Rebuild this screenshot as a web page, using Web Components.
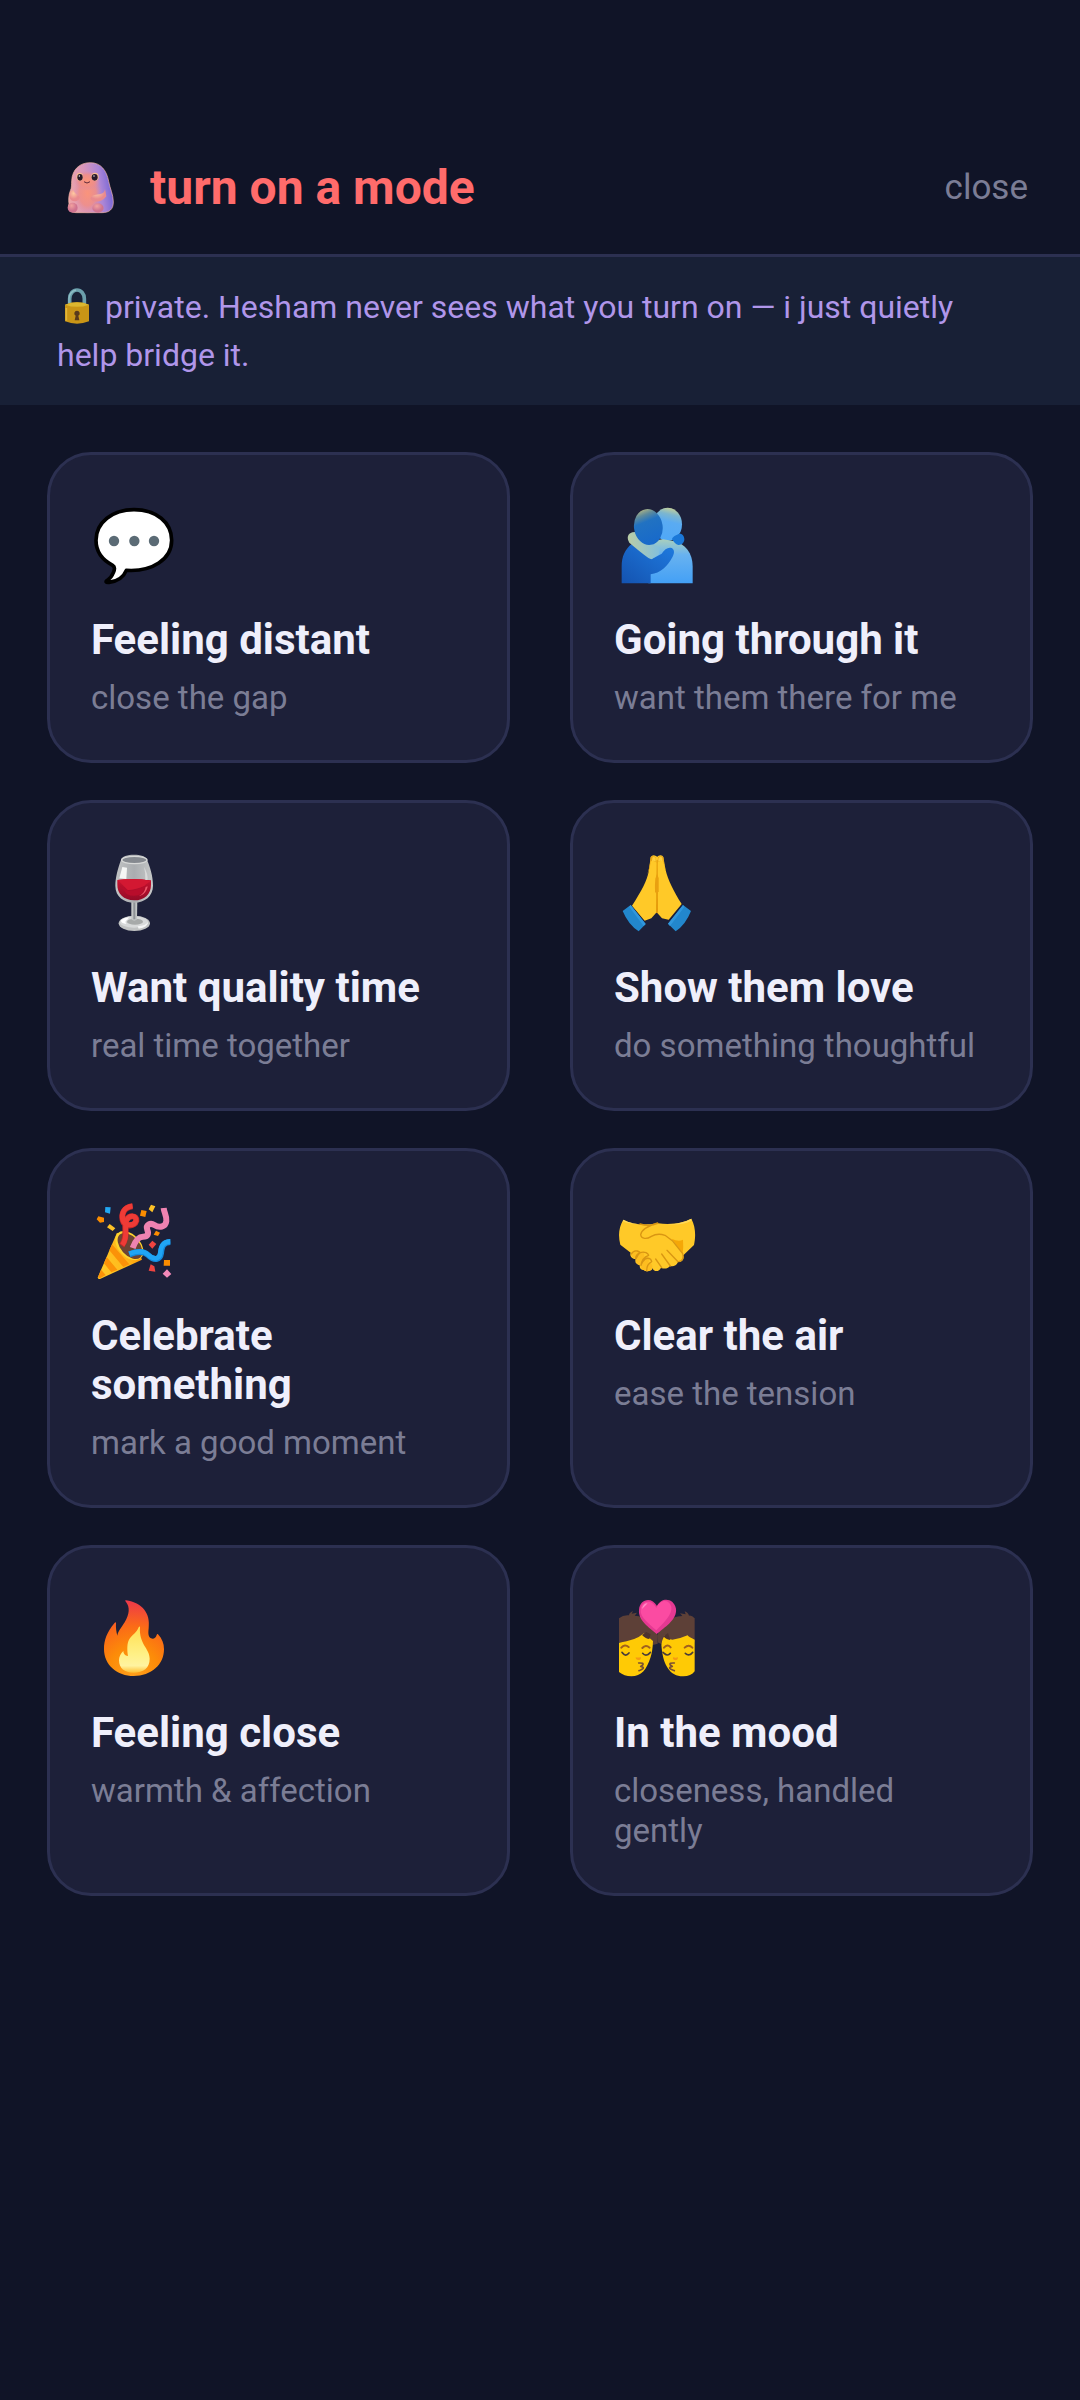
<!DOCTYPE html>
<html lang="en">
<head>
<meta charset="utf-8">
<meta name="viewport" content="width=device-width, initial-scale=1">
<title>turn on a mode</title>
<style>
  :root {
    --bg: #101427;
    --note: #182036;
    --card: #1d2039;
    --line: #2c3051;
    --text: #efeffb;
    --muted: #7b7d95;
    --coral: #ff6b6b;
    --lilac: #b096ea;
  }
  body {
    margin: 0;
    min-height: 100vh;
    background: var(--bg);
    color: var(--text);
    font-family: Roboto, "Liberation Sans", sans-serif;
  }
</style>
</head>
<body>
<mode-screen>
  <mode-header slot="header">turn on a mode</mode-header>
  <private-note slot="note">private. Hesham never sees what you turn on — i just quietly help bridge it.</private-note>
  <mode-card icon="speech" label="Feeling distant">close the gap</mode-card>
  <mode-card icon="hug" label="Going through it">want them there for me</mode-card>
  <mode-card icon="wine" label="Want quality time">real time together</mode-card>
  <mode-card icon="pray" label="Show them love">do something thoughtful</mode-card>
  <mode-card icon="party" label="Celebrate something">mark a good moment</mode-card>
  <mode-card icon="shake" label="Clear the air">ease the tension</mode-card>
  <mode-card icon="fire" label="Feeling close">warmth &amp; affection</mode-card>
  <mode-card icon="kiss" label="In the mood">closeness, handled gently</mode-card>
</mode-screen>

<script>
(function () {
  // box = viewBox, 3 units per css pixel
  const ICONS = {
    speech: {
      box: '18 0 270 300',
      art: `
        <path d="M147 44C82 44 33 82 33 136c0 32 17 58 50 75 7 4 6 13 2 22-4 10-10 18-17 22-8 5-5 8 4 7 25-3 43-14 52-36 78 5 136-33 136-90 0-54-46-92-113-92z" fill="#fff" stroke="#000" stroke-width="11" stroke-linejoin="round"/>
        <g fill="#5b6b75"><circle cx="87" cy="138" r="15.500"/><circle cx="148" cy="138" r="15.500"/><circle cx="207" cy="138" r="15.500"/></g>`
    },
    hug: {
      box: '27 0 270 300',
      art: `
        <defs>
          <linearGradient id="h1" x1=".6" y1="0" x2=".4" y2="1"><stop offset="0" stop-color="#c5cf98"/><stop offset=".2" stop-color="#7cb6cf"/><stop offset=".42" stop-color="#5aabf2"/><stop offset="1" stop-color="#4fa8f8"/></linearGradient>
          <linearGradient id="h2" x1=".4" y1="0" x2=".6" y2="1"><stop offset="0" stop-color="#a8b086"/><stop offset=".15" stop-color="#5e8b9c"/><stop offset=".34" stop-color="#2172c2"/><stop offset="1" stop-color="#1769cb"/></linearGradient>
          <linearGradient id="h3" x1="0" y1="0" x2="0" y2="1"><stop offset="0" stop-color="#a9cfbd"/><stop offset=".35" stop-color="#68b2f0"/><stop offset="1" stop-color="#43a0f6"/></linearGradient>
          <linearGradient id="h4" x1="0" y1="1" x2="1" y2="0"><stop offset="0" stop-color="#1453b0"/><stop offset="1" stop-color="#1f7be0"/></linearGradient>
          <linearGradient id="h5"><stop offset="0" stop-color="#b9cda6"/><stop offset="1" stop-color="#83bfdc"/></linearGradient>
        </defs>
        <ellipse cx="188" cy="88" rx="43" ry="50" fill="url(#h1)"/>
        <path d="M130 265V150q20-15 44-17l32 5c35 9 57 36 57 77v50z" fill="url(#h3)"/>
        <path d="M50 265v-50c0-31 10-53 31-69l60 46 29-16c9-14 20-21 30-17 10 5 8 17 2 28-14 27-36 48-65 51v27z" fill="url(#h4)"/>
        <path d="M73 143c-9-14-5-27 9-31l17-2 65 50-1 18-24 15q-12-4-66-50z" fill="url(#h5)"/>
        <ellipse cx="130" cy="96" rx="43" ry="54" fill="url(#h2)" transform="rotate(-8 130 96)"/>
        <path d="M201 133c2-9 12-12 20-16 10-3 17 6 17 16 0 11-9 18-18 17-8-1-13-9-19-17z" fill="#1b78d8"/>`
    },
    wine: {
      box: '18 -6 270 300',
      art: `
        <defs>
          <linearGradient id="w1"><stop offset="0" stop-color="#c2c4c5"/><stop offset=".5" stop-color="#aaadb0"/><stop offset="1" stop-color="#c6c8c8"/></linearGradient>
          <linearGradient id="w2" x1="0" y1="0" x2="0" y2="1"><stop offset="0" stop-color="#c81430"/><stop offset="1" stop-color="#940b27"/></linearGradient>
        </defs>
        <ellipse cx="148" cy="235" rx="47" ry="23" fill="#c1c3c3"/>
        <ellipse cx="147" cy="231" rx="42" ry="17" fill="#d8dada"/>
        <ellipse cx="150" cy="230" rx="24" ry="9" fill="#a7aaa9"/>
        <path d="M139 165h18l-1 58q-8 8-17 0z" fill="#c2c5c5"/>
        <path d="M145 170h6v53h-6z" fill="#8e9296"/>
        <path d="M108 45C99 68 91 99 91 122c0 34 26 51 57 51s56-20 56-51c0-29-9-57-18-77-3-21-75-21-78 0z" fill="url(#w1)"/>
        <path d="M97 105q51-7 101 1v13c0 29-20 47-50 47-32 0-52-20-51-48z" fill="url(#w2)"/>
        <path d="M98 105q49-7 99 3-14 10-18 14-33 14-51 13z" fill="#d31832"/>
        <path d="M103 119l27 18q30-1 49-14l-7 22q-23 14-47 2z" fill="#b80d2b"/>
        <ellipse cx="148" cy="45" rx="38" ry="11" fill="#85898f" stroke="#d8d9d8" stroke-width="4"/>
        <path d="M112 66l14 2-2 34-21-2z" fill="#f5f6f5"/>
        <path d="M177 65q12 21 11 40h-7q1-21-4-40z" fill="#d9dada"/>
        <path d="M182 126c-2 13-9 22-20 27 15-3 24-15 26-29z" fill="#ef5367"/>
        <path d="M108 226q10-9 24-9l-5 7q-10 6-2 13-18-1-17-11z" fill="#fff"/>
        <path d="M158 244q24-2 31-13 1 16-28 20z" fill="#f4f5f5"/>`
    },
    pray: {
      box: '27 -6 270 300',
      art: `
        <path d="M137 36q6-9 16-3 5 4 6 0 12-5 16 3l7 40c7 29 23 62 48 101l-39 47-20-4-16-18-16 18-20 7-38-45c30-47 45-76 50-102z" fill="#ffc928"/>
        <path d="M155 45l-2 157 3 3 3-3-1-157z" fill="#e59b0b"/>
        <path d="M151 101q-2 20-1 39l5 8 6-9V99l-5-13z" fill="#e9a010"/>
        <path d="M137 37q5-6 14-1l4 17q-11-10-18-3l-3 20-13 34q14-33 16-67zM175 37q-6-6-15-1l-4 17q12-10 19-3l5 22 11 29q-14-31-16-64z" fill="#e9a414"/>
        <path d="M142 38q5-6 10 2v10q-6-5-11 0zM160 41q5-10 12-2l1 11q-6-5-13 0z" fill="#ffd03e"/>
        <path d="M77 180l45 57-21 22q-31-20-48-61zM234 180l-45 56 23 23q30-20 46-61z" fill="#2287cd"/>
        <path d="M77 180l45 57-6 6-43-57zM234 180l-45 56 6 7 43-57z" fill="#3097dd"/>`
    },
    party: {
      box: '18 3 270 300',
      art: `
        <defs><linearGradient id="p1" x1="0" y1=".7" x2="1" y2=".3"><stop offset="0" stop-color="#ffc928"/><stop offset=".6" stop-color="#ffb719"/><stop offset="1" stop-color="#fb8c00"/></linearGradient></defs>
        <path d="M96 128L38 263q1 5 7 4l126-58-20-50z" fill="url(#p1)"/>
        <path d="M81 163l52 60-18 8-42-50zM65 201l32 38-18 8-22-27zM48 239l14 16-17 10-6-3z" fill="#fb9208"/>
        <ellipse cx="133" cy="167" rx="33" ry="51" transform="rotate(-43 133 167)" fill="#ffd42d"/>
        <ellipse cx="135" cy="168" rx="28" ry="46" transform="rotate(-42 135 168)" fill="#6d4434"/>
        <path d="M142 49c-27 4-33 24-29 41 5 22 36 21 41 2 2-17-21-17-30-1-10 20 8 47-14 76" fill="none" stroke="#c62828" stroke-width="18"/>
        <path d="M143 48c-28 3-34 24-30 41 6 21 35 19 40 3 1-17-19-17-28-2-10 21 8 46-13 75" fill="none" stroke="#ef3b36" stroke-width="15"/>
        <path d="M143 174q12-34 31-34c14 0 18-8 13-20-6-15 9-23 21-15 14 9 34 7 36-12 2-15-7-25-8-39" fill="none" stroke="#ef83b1" stroke-width="18"/>
        <path d="M133 193c27-10 44-10 56 2 19 19 36 15 39-5 2-20 5-33 28-34" fill="none" stroke="#1389dc" stroke-width="18"/>
        <path d="M133 191c27-10 44-9 56 3 19 18 35 13 37-7 2-20 8-32 30-33" fill="none" stroke="#20a5f5" stroke-width="14"/>
        <g fill="#fb8c00"><path d="M40 79l17 4v13l-12 2-10-10zM169 60l16 3-4 18-16-4zM213 122l12 6-6 10-13-4zM237 210h18v17h-19z"/></g>
        <g fill="#fcc127"><path d="M74 102l17 13-8 8-17-11zM198 44l13 5-9 18-11-9z"/></g>
        <g fill="#ef4440"><path d="M202 152l12 10-12 14-11-12zM197 223l11 6 3 16-20-3z"/></g>
        <path d="M61 51l16 1-2 19-15-4z" fill="#22a7f2"/>
        <path d="M246 238l13 14-13 11-13-12z" fill="#f389b9"/>`
    },
    shake: {
      box: '27 3 270 300',
      art: `
        <path d="M55 89c29 15 61 18 104 11 46 5 76-2 100-14 14 26 13 56 8 79l-32 31c2 13-2 20-16 20-5 12-15 15-24 12-8 10-19 9-27 5-6 14-21 13-27 1-6 10-15 14-25 6-9 0-14-7-11-16-13 0-16-8-13-17-11-1-19-9-15-19l-31-24c-7-27-5-52 9-75z" fill="#ffc928"/>
        <path d="M55 89q25 13 58 14-42 0-60-9zM259 86q-30 16-72 17 44 3 72-11z" fill="#ffd95b"/>
        <path d="M200 146q20 10 34 3 2 22-1 43z" fill="#f5a707"/>
        <path d="M77 188q0 14 15 19 1 18 15 20 2 14 17 15 9 3 17-3 4-17-6-21l-5 2q5-15-5-21l-8 1q3-13-8-17l-8 2q-9-11-24 3z" fill="#fdbd20"/>
        <path d="M158 99c-27 8-48 17-51 35 2 14 19 14 32 5 14-8 27-8 41-3l22 16 31 39q6 19-11 24M186 181l33 34M170 192l26 36M152 207l18 26M79 192q7-12 18-9 6 2 8 5-13 6-13 18M93 206c8-18 16-23 30-18q6 3 8 8-20 7-23 30M108 225c8-16 17-26 29-17q3 5 3 7-15 8-15 27M105 102q30 9 53-2" fill="none" stroke="#d99613" stroke-width="4" stroke-linecap="round" stroke-linejoin="round"/>`
    },
    fire: {
      box: '18 -6 270 300',
      art: `
        <defs>
          <radialGradient id="f1" gradientUnits="userSpaceOnUse" cx="145" cy="245" r="210"><stop offset="0" stop-color="#ff9f1c"/><stop offset=".35" stop-color="#fc8c08"/><stop offset=".65" stop-color="#fb6b17"/><stop offset="1" stop-color="#ee3a48"/></radialGradient>
          <linearGradient id="f2" x1="0" y1="0" x2="0" y2="1"><stop offset="0" stop-color="#ffdf51"/><stop offset=".6" stop-color="#fff086"/><stop offset=".85" stop-color="#fff3a0"/><stop offset="1" stop-color="#ffbf32"/></linearGradient>
        </defs>
        <path d="M123 31c-3-1-3 2 0 5 12 15 11 36-4 61-11 18-20 27-22 40-3-11-5-24-4-37 0-4-2-4-5 0-22 26-31 51-31 77 0 49 40 81 89 81 53 0 91-34 91-80 0-17-6-32-18-45-1-2-3-1-4 2-3 10-10 13-17 10-8-3-9-14-7-30 6-45-19-77-68-84z" fill="url(#f1)"/>
        <path d="M165 110c0-1-3 0-4 2-5 16-21 23-29 37-6 11-6 30-3 49-10-1-14-7-14-15-8 8-13 17-13 28 0 24 17 37 43 37 31 0 49-15 49-42 0-32-33-43-29-96z" fill="url(#f2)"/>`
    },
    kiss: {
      box: '27 -6 270 300',
      art: `
        <path d="M42 85q13-11 30-9 0-8 12-13l-4 8 16-3-7 9q53 4 69 60v24l-26 7-90-12zM269 85q-9-10-17-8-2-9-13-13l3 9-17-3 7 8q-56 3-74 55l-1 24 26 11 86-11z" fill="#5d4037"/>
        <path d="M42 158q48-5 75-28l27 23q-1 29-7 48c-12 38-28 58-58 58-14 0-27-5-37-13zM269 149q-18-8-21-13-19 9-46 13-17-3-22-13-13 17-10 38c5 52 26 86 65 85 15 0 27-5 34-15z" fill="#ffca05"/>
        <path d="M111 135q12 12 22 12l4-14-13-7zM176 139q6 10 20 11l-7-21z" fill="#4d332e"/>
        <path d="M49 173q10-12 22-2M112 174q10-12 22-1M177 173q10-12 20-1M239 173q12-12 23 0" fill="none" stroke="#a1611e" stroke-width="6" stroke-linecap="round"/>
        <path d="M53 190q9 11 19-1M113 190q9 11 20 0M178 190q10 10 18 0M241 190q10 9 19 0M51 187l5 5M136 187l-6 6M174 187l7 6M263 187l-6 6" fill="none" stroke="#493c3a" stroke-width="5" stroke-linecap="round"/>
        <path d="M92 202q9 2 15-1 3 8-6 9-9 0-9-8zM204 202q8 2 15 0 0 9-8 9-9-2-7-9z" fill="#f69a13"/>
        <path d="M101 219q17-1 12 6l-6 4q14 3 4 9-8 5-9 4M208 219q-17-1-12 6l6 4q-14 3-4 9 8 4 10 4" fill="none" stroke="#795034" stroke-width="5" stroke-linecap="round" stroke-linejoin="round"/>
        <path d="M155 132c-22-20-56-40-53-73 2-32 38-41 54-11 15-30 52-22 57 8 4 33-36 57-58 76z" fill="#e53992"/>
        <path d="M154 121c-21-20-49-38-47-62 1-26 32-35 47-5 12-27 38-27 45-4 4 24-24 49-45 71z" fill="#fb4ba2"/>
        <path d="M111 57q3-17 17-17-8 8-17 17z" fill="#ff91c9"/>`
    },
    lock: {
      box: '0 0 120 120',
      art: `
        <path d="M38 62V38a22 26 0 0 1 44 0v24" fill="none" stroke="#6b9fac" stroke-width="11"/>
        <path d="M36 52V38c1-15 9-23 21-26" fill="none" stroke="#8dbdc5" stroke-width="4"/>
        <path d="M24 56q36-14 72 0v50q-36 14-72 0z" fill="#c99516"/>
        <path d="M24 56q36-14 72 0-36 13-72 0z" fill="#dcb72f"/>
        <path d="M28 66v38" stroke="#e2b638" stroke-width="5"/>
        <path d="M60 74a8 8 0 0 1 4 15l3 14H53l3-14a8 8 0 0 1 4-15z" fill="#593a1c"/>`
    },
    buddy: {
      box: '6 18 192 192',
      art: `
        <defs>
          <linearGradient id="b1" x1="0" y1=".6" x2="1" y2=".45"><stop offset="0" stop-color="#eea5a8"/><stop offset=".4" stop-color="#d996bb"/><stop offset=".72" stop-color="#ac86d6"/><stop offset="1" stop-color="#6f62d6"/></linearGradient>
          <radialGradient id="b2"><stop offset="0" stop-color="#fa947b"/><stop offset=".6" stop-color="#f08e86" stop-opacity=".85"/><stop offset="1" stop-color="#dd8ba6" stop-opacity="0"/></radialGradient>
          <radialGradient id="b3" cx=".4" cy=".3"><stop offset="0" stop-color="#ffc9a2"/><stop offset="1" stop-color="#e98a8e"/></radialGradient>
          <radialGradient id="b4" cx=".4" cy=".3"><stop offset="0" stop-color="#f2a19e"/><stop offset="1" stop-color="#cf7390"/></radialGradient>
        </defs>
        <path d="M106 38c32 0 49 24 55 56 4 22 14 40 14 62 0 22-12 32-34 32H64c-19 0-28-11-22-26-2-12-1-28 4-40 5-10 3-18 4-30 2-34 24-54 56-54z" fill="url(#b1)" stroke="#f6b8a8" stroke-width="2"/>
        <ellipse cx="98" cy="130" rx="42" ry="62" fill="url(#b2)"/>
        <ellipse cx="96" cy="92" rx="40" ry="30" fill="url(#b2)"/>
        <path d="M46 124c-6 17-1 30 13 30 11 0 18-8 14-15-6-5-14-8-18-19z" fill="url(#b3)"/>
        <path d="M150 117c-2 16-14 15-27 17-13 2-21 10-14 16 13 9 34 5 45-11z" fill="url(#b3)"/>
        <circle cx="53" cy="173" r="15" fill="url(#b4)"/>
        <ellipse cx="129" cy="174" rx="17" ry="14" fill="url(#b4)"/>
        <ellipse cx="74" cy="80" rx="10" ry="12" fill="#f7bd91"/><ellipse cx="120" cy="80" rx="11" ry="12" fill="#f7bd91"/>
        <ellipse cx="75" cy="82" rx="8" ry="10" fill="#271929"/><ellipse cx="119" cy="82" rx="9" ry="10" fill="#271929"/>
        <circle cx="73" cy="78" r="2" fill="#fff"/><circle cx="117" cy="78" r="2" fill="#fff"/>
        <path d="M88 96q8 7 16 0" fill="none" stroke="#5d2738" stroke-width="3" stroke-linecap="round"/>`
    }
  };

  class ModeIcon extends HTMLElement {
    connectedCallback() {
      const icon = ICONS[this.getAttribute('name')];
      this.attachShadow({ mode: 'open' }).innerHTML = `
        <style>
          :host { display: block; flex: none; }
          svg { display: block; width: 100%; height: 100%; }
        </style>
        <svg viewBox="${icon.box}" aria-hidden="true">${icon.art}</svg>`;
    }
  }

  class ModeHeader extends HTMLElement {
    connectedCallback() {
      this.attachShadow({ mode: 'open' }).innerHTML = `
        <style>
          :host { display: block; }
          header {
            display: flex; align-items: center; gap: 29px;
            padding: 156px 52px 34px 57px;
            border-bottom: 3px solid var(--line);
          }
          mode-icon { width: 64px; height: 64px; }
          h1 { flex: 1; margin: 0; font-size: 48px; line-height: 56px; font-weight: 700; color: var(--coral); }
          button {
            padding: 0; border: 0; background: none; cursor: pointer;
            font: 400 35px/42px Roboto, sans-serif; color: var(--muted);
          }
        </style>
        <header>
          <mode-icon name="buddy"></mode-icon>
          <h1><slot></slot></h1>
          <button type="button">close</button>
        </header>`;
    }
  }

  class PrivateNote extends HTMLElement {
    connectedCallback() {
      this.attachShadow({ mode: 'open' }).innerHTML = `
        <style>
          :host { display: block; background: var(--note); }
          p { margin: 0; padding: 26px 66px 26px 57px; font-size: 32px; line-height: 48px; color: var(--lilac); }
          mode-icon { display: inline-block; width: 40px; height: 40px; vertical-align: -8px; }
        </style>
        <p><mode-icon name="lock"></mode-icon> <slot></slot></p>`;
    }
  }

  class ModeCard extends HTMLElement {
    connectedCallback() {
      this.attachShadow({ mode: 'open' }).innerHTML = `
        <style>
          :host { display: grid; }
          button {
            display: flex; flex-direction: column; align-items: flex-start; justify-content: flex-start;
            padding: 40px 41px 42px;
            border: 3px solid var(--line); border-radius: 44px;
            background: var(--card); color: inherit;
            font-family: inherit; text-align: left; cursor: pointer;
          }
          mode-icon { width: 90px; height: 100px; margin-bottom: 20px; }
          .label { font-size: 42px; line-height: 49px; font-weight: 700; }
          .hint { margin-top: 14px; font-size: 33px; line-height: 40px; color: var(--muted); }
        </style>
        <button type="button">
          <mode-icon name="${this.getAttribute('icon')}"></mode-icon>
          <span class="label">${this.getAttribute('label')}</span>
          <span class="hint"><slot></slot></span>
        </button>`;
    }
  }

  class ModeScreen extends HTMLElement {
    connectedCallback() {
      this.attachShadow({ mode: 'open' }).innerHTML = `
        <style>
          :host { display: block; }
          main {
            display: grid; grid-template-columns: 1fr 1fr;
            gap: 37px 60px; padding: 47px;
          }
        </style>
        <slot name="header"></slot>
        <slot name="note"></slot>
        <main><slot></slot></main>`;
    }
  }

  customElements.define('mode-icon', ModeIcon);
  customElements.define('mode-header', ModeHeader);
  customElements.define('private-note', PrivateNote);
  customElements.define('mode-card', ModeCard);
  customElements.define('mode-screen', ModeScreen);
})();
</script>
</body>
</html>
